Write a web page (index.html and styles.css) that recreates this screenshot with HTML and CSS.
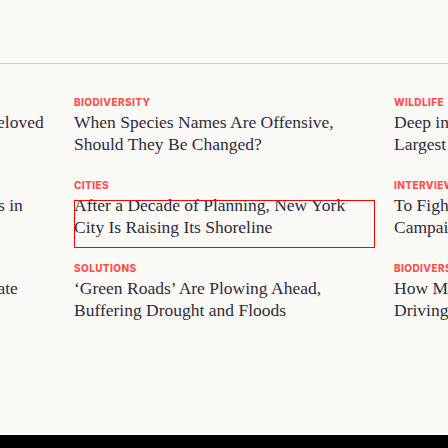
FILE: index.html
```html
<!DOCTYPE html>
<html lang="en">
<head>
<meta charset="utf-8">
<title>Stories</title>
<link rel="stylesheet" href="styles.css">
</head>
<body>
<div class="page">
  <main class="main">
    <section class="rail">
      <div class="track">
        <div class="col">
          <article class="story">
            <span class="label">Wildlife</span>
            <a class="headline" href="#">Ecologists Race to Save a City’s Beloved Old Trees</a>
          </article>
          <article class="story">
            <span class="label">Energy</span>
            <a class="headline" href="#">The Rapid Rise of City Solar Fields in Crowded Places</a>
          </article>
          <article class="story">
            <span class="label">Climate</span>
            <a class="headline" href="#">Growers Prepare for a Hotter Climate Ahead</a>
          </article>
        </div>
        <div class="col">
          <article class="story">
            <span class="label">Biodiversity</span>
            <a class="headline" href="#">When Species Names Are Offensive, Should They Be Changed?</a>
          </article>
          <article class="story">
            <span class="label">Cities</span>
            <a class="headline is-focused" href="#">After a Decade of Planning, New York City Is Raising Its Shoreline</a>
          </article>
          <article class="story">
            <span class="label">Solutions</span>
            <a class="headline" href="#">‘Green Roads’ Are Plowing Ahead, Buffering Drought and Floods</a>
          </article>
        </div>
        <div class="col">
          <article class="story">
            <span class="label">Wildlife</span>
            <a class="headline" href="#">Deep in the Rainforest, the World’s Largest Flower Blooms</a>
          </article>
          <article class="story">
            <span class="label">Interview</span>
            <a class="headline" href="#">To Fight Plastic, One Activist Takes Her Campaign Global</a>
          </article>
          <article class="story">
            <span class="label">Biodiversity</span>
            <a class="headline" href="#">How Mining for Battery Metals Is Now Driving Species Loss</a>
          </article>
        </div>
      </div>
    </section>
  </main>
  <footer class="bar"></footer>
</div>
</body>
</html>
```
FILE: styles.css
```css
* { box-sizing: border-box; }
html, body { margin: 0; padding: 0; }
body {
  background: #fbfaf6;
  color: #2e2c3a;
  font-family: "Liberation Serif", "Times New Roman", serif;
}
.page {
  min-height: 100vh;
  display: flex;
  flex-direction: column;
}
.main {
  flex: 1;
  padding-top: 63px;
}
.rail {
  border-top: 1px solid #cfcbc5;
  overflow: hidden;
  padding-top: 31px;
}
.track {
  display: flex;
  gap: 20px;
  margin-left: -246px;
}
.col {
  flex: 0 0 300px;
  display: flex;
  flex-direction: column;
  gap: 23px;
}
.story {
  display: flex;
  flex-direction: column;
}
.label {
  display: block;
  font-family: Inter, "Liberation Sans", Arial, sans-serif;
  font-weight: 800;
  font-size: 10px;
  line-height: 14px;
  letter-spacing: 0.4px;
  text-transform: uppercase;
  color: #ff4f4f;
  margin-bottom: 2px;
}
.headline {
  position: relative;
  display: block;
  font-size: 17.5px;
  line-height: 22px;
  color: #2e2c3a;
  text-decoration: none;
  height: 44px;
}
.headline.is-focused::after {
  content: "";
  position: absolute;
  left: 0;
  right: -1px;
  top: 6px;
  bottom: -10px;
  border: 1px solid #ff0000;
  pointer-events: none;
}
.bar {
  height: 13px;
  background: #000;
}
```
